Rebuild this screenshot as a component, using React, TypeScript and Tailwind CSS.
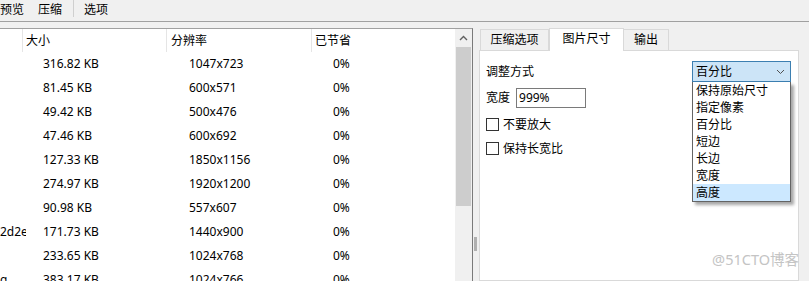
import React from "react";

const rows = [
  { name: "", size: "316.82 KB", res: "1047x723" },
  { name: "", size: "81.45 KB", res: "600x571" },
  { name: "", size: "49.42 KB", res: "500x476" },
  { name: "", size: "47.46 KB", res: "600x692" },
  { name: "", size: "127.33 KB", res: "1850x1156" },
  { name: "", size: "274.97 KB", res: "1920x1200" },
  { name: "", size: "90.98 KB", res: "557x607" },
  { name: "2d2e", size: "171.73 KB", res: "1440x900" },
  { name: "", size: "233.65 KB", res: "1024x768" },
  { name: "g", size: "383.17 KB", res: "1024x766" },
];

const options = ["保持原始尺寸", "指定像素", "百分比", "短边", "长边", "宽度", "高度"];

function Checkbox({ label }: { label: string }) {
  return (
    <div className="flex items-center h-[13px]">
      <div className="w-[13px] h-[13px] border border-[#333333] bg-white" />
      <span className="ml-[4px] leading-none">{label}</span>
    </div>
  );
}

export default function App() {
  return (
    <div
      className="relative w-[809px] h-[281px] overflow-hidden bg-[#f0f0f0] text-[12px] text-black"
      style={{ fontFamily: '"Noto Sans", "Noto Sans CJK SC", sans-serif' }}
    >
      {/* menu bar */}
      <div className="flex h-[22px] border-b border-[#a0a0a0]">
        <div className="flex items-center h-[19px]">预览</div>
        <div className="flex items-center h-[19px] ml-[14px]">压缩</div>
        <div className="w-px h-[17px] bg-[#cfcfcf] ml-[11px]" />
        <div className="flex items-center h-[19px] ml-[10px]">选项</div>
      </div>

      <div className="flex mt-[6px] h-[253px]">
        {/* list view */}
        <div className="flex w-[473px] shrink-0 border-t border-r border-t-[#a0a0a0] border-r-[#7a7a7a] bg-white">
          <div className="w-[455px] shrink-0 flex flex-col overflow-hidden">
            <div className="flex h-[23px] shrink-0 items-center">
              <div className="w-[23px] h-full border-r border-[#e5e5e5]" />
              <div className="w-[144px] h-full border-r border-[#e5e5e5] flex items-center pl-[3px]">大小</div>
              <div className="w-[145px] h-full border-r border-[#e5e5e5] flex items-center pl-[4px]">分辨率</div>
              <div className="flex-1 h-full flex items-center pl-[3px]">已节省</div>
            </div>
            {rows.map((r, i) => (
              <div key={i} className="flex h-[24px] items-center shrink-0 whitespace-nowrap">
                <div className="w-[23px] shrink-0 overflow-visible">
                  <span className="block w-[26px] overflow-hidden">{r.name}</span>
                </div>
                <div className="w-[145px] shrink-0 pl-[20px]">{r.size}</div>
                <div className="w-[144px] shrink-0 pl-[21px]">{r.res}</div>
                <div className="flex-1 pl-[21px]">0%</div>
              </div>
            ))}
          </div>
          {/* scrollbar */}
          <div className="w-[17px] shrink-0 bg-[#f0f0f0] flex flex-col">
            <div className="h-[18px] flex items-center justify-center">
              <svg width="9" height="6" viewBox="0 0 9 6">
                <path d="M1 5 L4.5 1.5 L8 5" fill="none" stroke="#606060" strokeWidth="1.4" />
              </svg>
            </div>
            <div className="mx-px h-[159px] bg-[#cdcdcd]" />
          </div>
        </div>

        {/* splitter */}
        <div className="w-[6px] shrink-0">
          <div className="ml-px mt-[209px] w-[3px] h-[14px] bg-[#b0b0b0]" />
        </div>

        {/* right pane */}
        <div className="flex-1 flex flex-col">
          <div className="flex items-end h-[22px] shrink-0 pl-px">
            <div className="w-[69px] h-[21px] border border-b-0 border-[#d9d9d9] bg-[#f0f0f0] flex items-center justify-center">
              压缩选项
            </div>
            <div className="relative z-10 -mb-px w-[75px] h-[23px] border border-b-0 border-[#d9d9d9] bg-white flex items-center justify-center pb-[2px]">
              图片尺寸
            </div>
            <div className="w-[45px] h-[21px] border border-b-0 border-l-0 border-[#d9d9d9] bg-[#f0f0f0] flex items-center justify-center">
              输出
            </div>
          </div>
          <div className="w-[320px] flex-1 border border-[#d9d9d9] bg-white pl-[6px] pr-[7px] pt-[10px]">
            <div className="flex items-center justify-between h-[21px]">
              <span>调整方式</span>
              <div className="relative w-[99px] h-[21px]">
                <div className="w-full h-full border border-[#3c7fb1] bg-[#cce4f7] flex items-center justify-between pl-[3px] pr-[5px]">
                  <span>百分比</span>
                  <svg width="9" height="6" viewBox="0 0 9 6">
                    <path d="M1 1 L4.5 4.5 L8 1" fill="none" stroke="#505050" strokeWidth="1" />
                  </svg>
                </div>
                <div className="absolute left-0 top-full w-[99px] border border-t-0 border-[#646464] bg-white shadow-[3px_3px_3px_rgba(0,0,0,0.35)] z-20">
                  {options.map((o) => (
                    <div
                      key={o}
                      className={
                        "h-[17px] flex items-center pl-[3px] " + (o === "高度" ? "bg-[#cce8ff]" : "")
                      }
                    >
                      {o}
                    </div>
                  ))}
                </div>
              </div>
            </div>
            <div className="flex items-center mt-[6px] h-[20px]">
              <span>宽度</span>
              <div className="ml-[6px] w-[70px] h-[20px] border border-[#7a7a7a] flex items-center pl-[2px]">999%</div>
            </div>
            <div className="mt-[10px]">
              <Checkbox label="不要放大" />
            </div>
            <div className="mt-[11px]">
              <Checkbox label="保持长宽比" />
            </div>
          </div>
        </div>
      </div>

      <div className="absolute right-[10px] top-[252px] text-[14.5px] text-[#c4c4c4] leading-none">@51CTO博客</div>
    </div>
  );
}
